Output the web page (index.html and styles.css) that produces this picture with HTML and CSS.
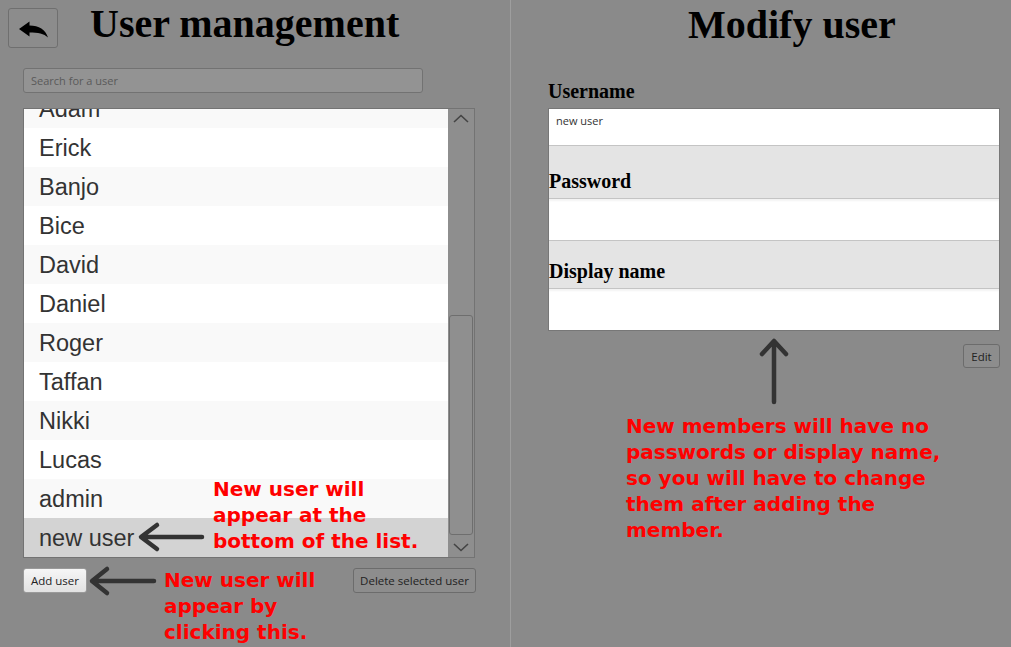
FILE: index.html
```html
<!DOCTYPE html>
<html lang="en">
<head>
<meta charset="utf-8">
<title>User management</title>
<link rel="stylesheet" href="styles.css">
</head>
<body>
<div class="app">
  <section class="left">
    <header class="left-head">
      <button class="back" type="button" aria-label="Back">
        <svg width="48" height="38" viewBox="0 0 48 38">
          <path d="M10 20 L20.5 12.5 L20.5 16.5 C30 16.5 36.5 20.5 39 28.5 C35 24.5 29 23.5 20.5 23.5 L20.5 27.5 Z" fill="#000"/>
        </svg>
      </button>
      <h1 class="title">User management</h1>
    </header>
    <input class="search" type="text" placeholder="Search for a user">
    <div class="list">
      <div class="list-view">
        <ul class="rows">
          <li class="row alt">Adam</li>
          <li class="row">Erick</li>
          <li class="row alt">Banjo</li>
          <li class="row">Bice</li>
          <li class="row alt">David</li>
          <li class="row">Daniel</li>
          <li class="row alt">Roger</li>
          <li class="row">Taffan</li>
          <li class="row alt">Nikki</li>
          <li class="row">Lucas</li>
          <li class="row alt">admin</li>
          <li class="row selected">new user</li>
        </ul>
      </div>
      <div class="scrollbar">
        <div class="sb-btn">
          <svg width="26" height="22" viewBox="0 0 26 22"><polyline points="6,13 13,6.5 20,13" fill="none" stroke="#444" stroke-width="1.6"/></svg>
        </div>
        <div class="sb-track"><div class="sb-thumb"></div></div>
        <div class="sb-btn">
          <svg width="26" height="22" viewBox="0 0 26 22"><polyline points="6,9 13,15.5 20,9" fill="none" stroke="#444" stroke-width="1.6"/></svg>
        </div>
      </div>
    </div>
    <div class="actions">
      <button class="btn btn-light" type="button">Add user</button>
      <button class="btn btn-delete" type="button">Delete selected user</button>
    </div>
  </section>

  <section class="right">
    <h1 class="title title-right">Modify user</h1>
    <div class="label label-top">Username</div>
    <div class="form">
      <div class="field field-first">new user</div>
      <div class="band band-one"><span class="label">Password</span></div>
      <div class="field field-mid"></div>
      <div class="band band-two"><span class="label">Display name</span></div>
      <div class="field field-last"></div>
    </div>
    <div class="form-actions">
      <button class="btn btn-edit" type="button">Edit</button>
    </div>
  </section>

  <svg class="arrows" width="1011" height="647" viewBox="0 0 1011 647">
    <g fill="none" stroke="#333" stroke-width="4.5" stroke-linecap="round" stroke-linejoin="round">
      <path d="M202 537 H142 M157 525 L141 537 L157 549"/>
      <path d="M154 581 H93 M107 569 L92 581 L107 593"/>
      <path d="M774 402 V342 M762 354 L774 341 L786 354"/>
    </g>
  </svg>

  <p class="note note-list">New user will<br>appear at the<br>bottom of the list.</p>
  <p class="note note-add">New user will<br>appear by<br>clicking this.</p>
  <p class="note note-form">New members will have no<br>passwords or display name,<br>so you will have to change<br>them after adding the<br>member.</p>
</div>
</body>
</html>
```

FILE: styles.css
```css
* {
  box-sizing: border-box;
}

html, body {
  margin: 0;
  padding: 0;
}

body {
  width: 1011px;
  height: 647px;
  overflow: hidden;
  background: #8a8a8a;
  font-family: "Open Sans", "Liberation Sans", sans-serif;
}

.app {
  position: relative;
  display: flex;
  width: 1011px;
  height: 647px;
}

/* ---------- left panel ---------- */
.left {
  width: 510px;
  flex: none;
}

.left-head {
  display: flex;
  align-items: flex-start;
  padding-left: 8px;
}

.back {
  width: 50px;
  height: 40px;
  margin-top: 8px;
  padding: 0;
  border: 1px solid #6f6f6f;
  border-radius: 3px;
  background: #8c8c8c;
  display: flex;
  align-items: center;
  justify-content: center;
}

.back svg {
  display: block;
}

.title {
  margin: 4px 0 0 32px;
  font-family: "Liberation Serif", "Times New Roman", serif;
  font-weight: bold;
  font-size: 40px;
  line-height: 40px;
  color: #000;
}

.search {
  display: block;
  margin: 20px 0 0 23px;
  width: 400px;
  height: 25px;
  padding: 0 7px;
  border: 1px solid #727272;
  border-radius: 3px;
  background: #939393;
  font-family: "Open Sans", "Liberation Sans", sans-serif;
  font-size: 11px;
  color: #333;
  outline: none;
}

.search::placeholder {
  color: #5a5a5a;
}

.list {
  display: flex;
  margin: 15px 0 0 23px;
  width: 452px;
  height: 450px;
  border: 1px solid #737373;
}

.list-view {
  width: 424px;
  height: 448px;
  overflow: hidden;
  background: #fff;
}

.rows {
  list-style: none;
  margin: -20px 0 0;
  padding: 0;
}

.row {
  height: 39px;
  padding: 1px 0 0 15px;
  font-family: "Liberation Sans", Arial, sans-serif;
  font-size: 23.5px;
  line-height: 39px;
  color: #333;
  background: #fff;
}

.row.alt {
  background: #f9f9f9;
}

.row.selected {
  background: #d3d3d3;
}

.scrollbar {
  width: 26px;
  display: flex;
  flex-direction: column;
  background: #8e8e8e;
}

.sb-btn {
  height: 22px;
  flex: none;
}

.sb-btn svg {
  display: block;
}

.sb-track {
  flex: 1;
}

.sb-thumb {
  margin: 184px 0 0 1px;
  width: 24px;
  height: 220px;
  border: 1px solid #6e6e6e;
  border-radius: 3px;
  background: #8f8f8f;
}

.actions {
  display: flex;
  justify-content: space-between;
  margin: 10px 0 0 23px;
  width: 453px;
}

.btn {
  height: 25px;
  padding: 0 7px;
  border: 1px solid #6c6c6c;
  border-radius: 3px;
  background: #8d8d8d;
  font-family: "Open Sans", "Liberation Sans", sans-serif;
  font-size: 11.5px;
  color: #222;
}

.btn-light {
  width: 64px;
  padding: 0;
  border-color: #9a9a9a;
  background: linear-gradient(#f6f6f6, #e2e2e2);
}

.btn-delete {
  width: 123px;
  padding: 0;
}

/* ---------- right panel ---------- */
.right {
  flex: 1;
  border-left: 1px solid #9e9e9e;
  padding-left: 37px;
}

.title-right {
  margin: 5px 0 0;
  padding-left: 140px;
}

.label {
  font-family: "Liberation Serif", "Times New Roman", serif;
  font-weight: bold;
  font-size: 20px;
  line-height: 20px;
  color: #000;
}

.label-top {
  margin-top: 36px;
}

.form {
  margin-top: 7px;
  width: 452px;
  border: 1px solid #777;
}

.field {
  background: #fff;
  font-size: 11px;
  color: #333;
  box-shadow: inset 0 2px 2px rgba(0, 0, 0, 0.05);
}

.field-first {
  height: 37px;
  padding: 4px 7px 0;
  border-bottom: 1px solid #c4c4c4;
  box-shadow: none;
}

.field-mid {
  height: 43px;
  border-top: 1px solid #c4c4c4;
  border-bottom: 1px solid #c4c4c4;
}

.field-last {
  height: 42px;
  border-top: 1px solid #c4c4c4;
}

.band {
  display: flex;
  align-items: flex-end;
  padding-bottom: 7px;
  background: #e4e4e4;
}

.band-one {
  height: 52px;
}

.band-two {
  height: 47px;
}

.form-actions {
  display: flex;
  justify-content: flex-end;
  width: 452px;
  margin-top: 13px;
}

.btn-edit {
  width: 37px;
  height: 24px;
  padding: 0;
}

/* ---------- annotations (overlay) ---------- */
.arrows {
  position: absolute;
  left: 0;
  top: 0;
  pointer-events: none;
}

.note {
  position: absolute;
  margin: 0;
  font-family: "DejaVu Sans", Verdana, sans-serif;
  font-weight: bold;
  font-size: 20px;
  line-height: 26px;
  color: #ff0000;
  white-space: nowrap;
}

.note-list {
  left: 213px;
  top: 476px;
}

.note-add {
  left: 164px;
  top: 567px;
}

.note-form {
  left: 626px;
  top: 413px;
}
```
